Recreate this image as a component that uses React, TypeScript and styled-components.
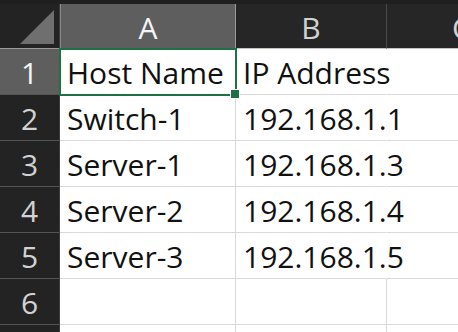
import styled, { createGlobalStyle } from 'styled-components';

const GlobalStyle = createGlobalStyle`
	html, body {
		margin: 0;
		padding: 0;
		background: #1f1f1f;
	}
	body {
		font-family: 'Open Sans', 'Liberation Sans', sans-serif;
	}
`;

const Sheet = styled.div`
	display: grid;
	grid-template-columns: 60px 176px 151px 150px;
	grid-template-rows: 49px repeat(7, 46px);
	width: 458px;
	height: 332px;
	overflow: hidden;
	background: #1f1f1f;
	font-size: 30px;
`;

const Corner = styled.div`
	position: relative;
	background: #232323;
	border-bottom: 1px solid #9a9a9a;
	border-right: 1px solid #3c3c3c;
	margin-top: 4px;
	box-sizing: border-box;
`;

const Triangle = styled.svg`
	position: absolute;
	right: 5px;
	bottom: 4px;
`;

const ColHeader = styled.div<{ $selected?: boolean }>`
	display: flex;
	align-items: center;
	justify-content: center;
	box-sizing: border-box;
	margin-top: 4px;
	padding-top: 2px;
	background: ${(p) => (p.$selected ? '#5e5e5e' : '#262626')};
	color: ${(p) => (p.$selected ? '#f4f4f4' : '#d2d2d2')};
	border-left: ${(p) => (p.$selected ? '1px solid #8a8a8a' : 'none')};
	border-right: 1px solid ${(p) => (p.$selected ? '#9a9a9a' : '#4a4a4a')};
	border-bottom: 1px solid #c4c4c4;
	overflow: hidden;
	white-space: nowrap;
`;

const RowHeader = styled.div<{ $selected?: boolean }>`
	display: flex;
	align-items: center;
	justify-content: center;
	box-sizing: border-box;
	padding-top: 2px;
	background: ${(p) => (p.$selected ? '#5e5e5e' : '#232323')};
	color: ${(p) => (p.$selected ? '#f4f4f4' : '#d2d2d2')};
	border-right: 1px solid ${(p) => (p.$selected ? '#9a9a9a' : '#3c3c3c')};
	border-bottom: 1px solid #555555;
`;

// $spill: text runs over into the empty cell on its right, as in Excel
const Cell = styled.div<{ $active?: boolean; $spill?: boolean }>`
	position: relative;
	display: flex;
	align-items: center;
	box-sizing: border-box;
	padding: 2px 0 0 7px;
	background: #ffffff;
	color: #111111;
	border-right: 1px solid ${(p) => (p.$spill ? '#ffffff' : '#d9d9d9')};
	border-bottom: 1px solid #d9d9d9;
	white-space: nowrap;
	overflow: visible;
	z-index: ${(p) => (p.$active ? 3 : p.$spill ? 2 : 1)};
	outline: ${(p) => (p.$active ? '2px solid #1e7145' : 'none')};
	outline-offset: -1px;
`;

const FillHandle = styled.span`
	position: absolute;
	right: -5px;
	bottom: -5px;
	width: 8px;
	height: 8px;
	background: #1e7145;
	border: 1px solid #ffffff;
`;

const rows = [
	['Host Name', 'IP Address'],
	['Switch-1', '192.168.1.1'],
	['Server-1', '192.168.1.3'],
	['Server-2', '192.168.1.4'],
	['Server-3', '192.168.1.5'],
	['', ''],
	['', ''],
];

export default function App() {
	return (
		<>
			<GlobalStyle />
			<Sheet>
				<Corner>
					<Triangle width="34" height="34" viewBox="0 0 34 34">
						<polygon points="34,0 34,34 0,34" fill="#6f6f6f" />
					</Triangle>
				</Corner>
				<ColHeader $selected>A</ColHeader>
				<ColHeader>B</ColHeader>
				<ColHeader>C</ColHeader>
				{rows.map((r, i) => (
					<Row key={i} index={i} cells={r} />
				))}
			</Sheet>
		</>
	);
}

function Row(props: { index: number; cells: string[] }) {
	const active = props.index === 0;
	// the last row only peeks in at the bottom edge; its number is off-screen
	const label = props.index < 6 ? props.index + 1 : '';
	return (
		<>
			<RowHeader $selected={active}>{label}</RowHeader>
			<Cell $active={active}>
				{props.cells[0]}
				{active && <FillHandle />}
			</Cell>
			<Cell $spill={props.cells[1] !== ''}>{props.cells[1]}</Cell>
			<Cell />
		</>
	);
}
